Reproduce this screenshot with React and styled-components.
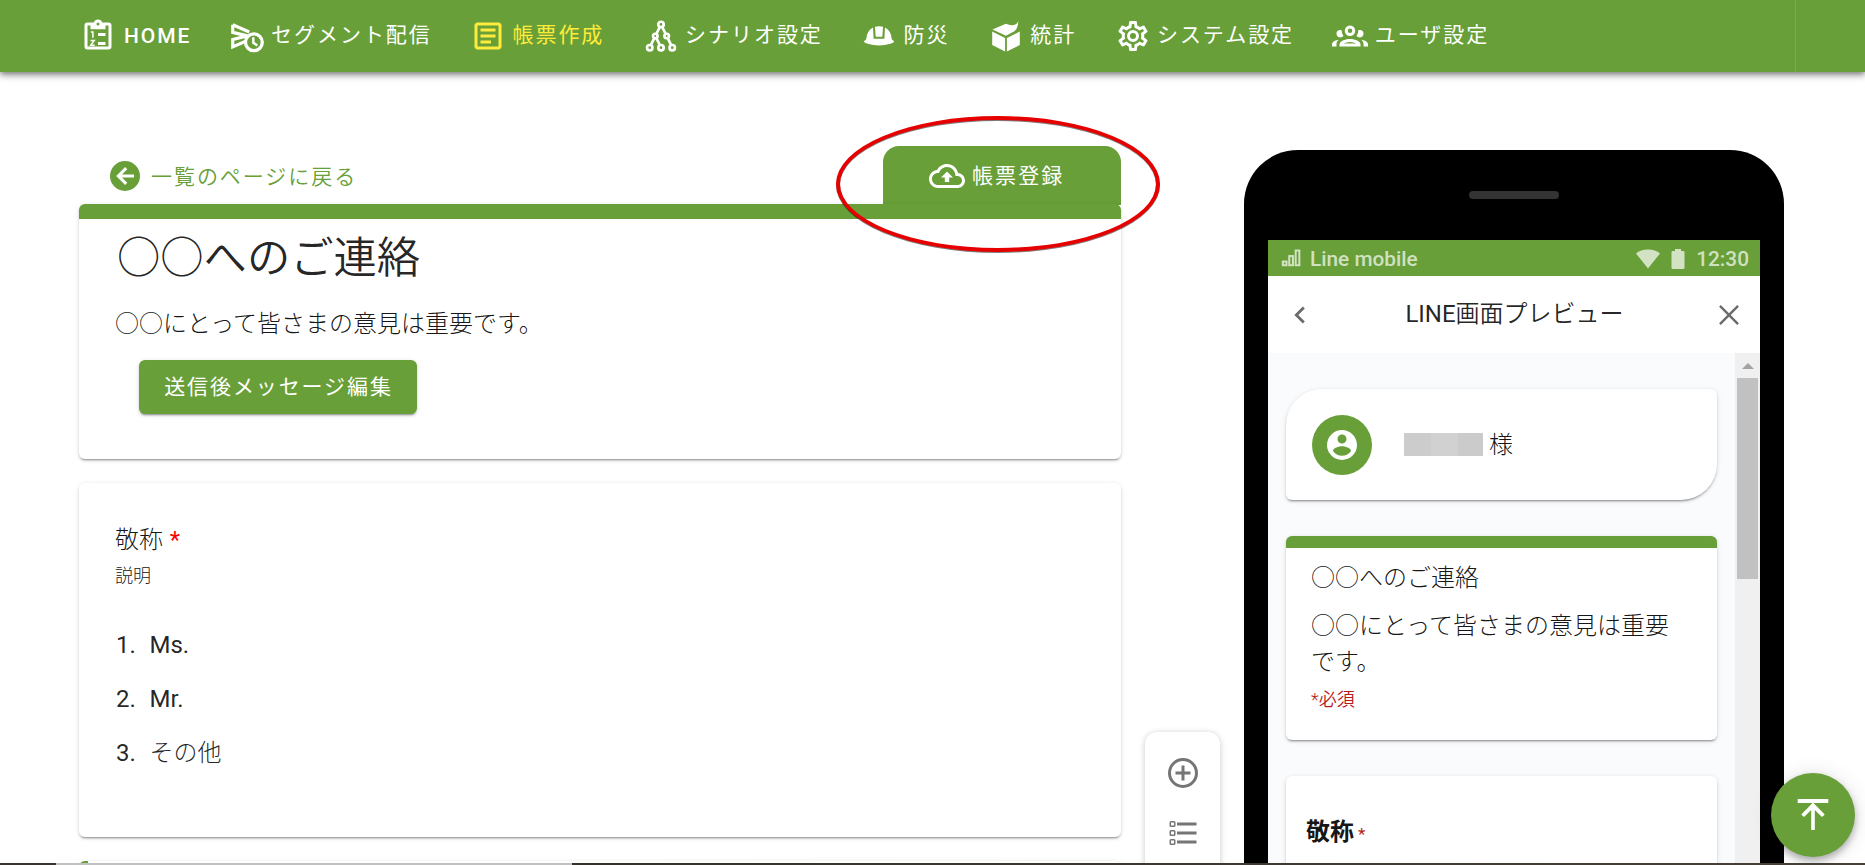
import React from "react";
import styled, { createGlobalStyle, css } from "styled-components";

const GREEN = "#689f38";

const GlobalStyle = createGlobalStyle`
  *, *::before, *::after { box-sizing: border-box; }
  body {
    margin: 0;
    background: #fff;
    color: rgba(0, 0, 0, 0.92);
    font-family: Roboto, "Noto Sans CJK JP", sans-serif;
    font-weight: 300;
    overflow: hidden;
  }
`;

const elevation = css`
  box-shadow: 0 3px 1px -2px rgba(0, 0, 0, 0.2), 0 2px 2px 0 rgba(0, 0, 0, 0.14),
    0 1px 5px 0 rgba(0, 0, 0, 0.12);
`;

const Page = styled.div`
  position: relative;
  width: 1865px;
  height: 865px;
  overflow: hidden;
  display: flex;
  flex-direction: column;
`;

const Header = styled.header`
  flex: none;
  height: 72px;
  display: flex;
  justify-content: space-between;
  background: ${GREEN};
  box-shadow: 0 2px 6px rgba(0, 0, 0, 0.45), 0 4px 8px rgba(0, 0, 0, 0.15);
`;

const Nav = styled.nav`
  display: flex;
  align-items: center;
  gap: 38.4px;
  padding: 0 0 1px 80px;
`;

const NavItem = styled.a`
  display: flex;
  align-items: center;
  gap: 6.4px;
  color: ${(p) => (p.$active ? "#ffeb3b" : "#fff")};
  white-space: nowrap;
`;

const NavLabel = styled.span`
  padding-top: ${(p) => (p.$latin ? 1 : 0)}px;
  padding-bottom: ${(p) => (p.$latin ? 0 : 1)}px;
  padding-left: ${(p) => (p.$latin ? 1.5 : 0)}px;
  margin-right: ${(p) => (p.$latin ? -1 : 0)}px;
  font-size: 21px;
  line-height: 32px;
  letter-spacing: 1.95px;
  font-weight: ${(p) => (p.$latin ? 500 : 400)};
`;

const HeaderEnd = styled.div`
  width: 70px;
  border-left: 1px solid #79ab4e;
`;

const Svg = styled.svg`
  flex: none;
  display: block;
  width: ${(p) => p.$size || 36}px;
  height: ${(p) => p.$size || 36}px;
  fill: currentColor;
`;

const Body = styled.main`
  flex: 1;
  min-height: 0;
  display: flex;
  align-items: flex-start;
  padding-left: 79px;
`;

const Editor = styled.section`
  width: 1042px;
  padding-top: 74px;
`;

const TopRow = styled.div`
  display: flex;
  justify-content: space-between;
  height: 58px;
`;

const BackLink = styled.a`
  display: flex;
  align-items: center;
  gap: 8px;
  height: 60px;
  padding-left: 28px;
  color: ${GREEN};
  font-size: 21px;
  font-weight: 350;
  letter-spacing: 1.95px;
`;

const Lifted = styled.span`
  padding-bottom: 3px;
`;

const RegisterTab = styled.button`
  display: flex;
  align-items: center;
  gap: 7px;
  width: 238px;
  height: 59px;
  padding: 0 0 0 46px;
  border: 0;
  border-radius: 16px 16px 0 0;
  background: ${GREEN};
  color: #fff;
  font: 400 21px Roboto, "Noto Sans CJK JP", sans-serif;
  letter-spacing: 2.1px;
`;

const Card = styled.article`
  position: relative;
  height: ${(p) => p.$height}px;
  margin-bottom: 24px;
  padding: ${(p) => p.$pad || "0"};
  border-radius: 6px;
  border-top: ${(p) => (p.$bar ? `${p.$bar}px solid ${GREEN}` : "0")};
  background: #fff;
  ${elevation}
`;

const FormTitle = styled.h1`
  margin: 0;
  color: rgba(0, 0, 0, 0.87);
  font-size: 43.3px;
  line-height: 60px;
  font-weight: 350;
  white-space: nowrap;
`;

const FormText = styled.p`
  margin: 17px 0 0 -2px;
  font-size: 24px;
  line-height: 36px;
  white-space: nowrap;
`;

const PrimaryButton = styled.button`
  display: block;
  width: 278px;
  height: 54px;
  margin: 18px 0 0 22px;
  padding: 0 0 4px 1px;
  border: 0;
  border-radius: 6px;
  background: ${GREEN};
  color: #fff;
  font: 400 21px Roboto, "Noto Sans CJK JP", sans-serif;
  letter-spacing: 1.9px;
  ${elevation}
`;

const Question = styled.h2`
  margin: 0;
  font-size: 24px;
  line-height: 36px;
  font-weight: 300;
`;

const Required = styled.span`
  margin-left: 1px;
  color: #f00;
  font-weight: 400;
`;

const Hint = styled.p`
  margin: 4px 0 0;
  font-size: 18px;
  line-height: 28px;
`;

const Options = styled.ol`
  list-style: none;
  margin: 28px 0 0 1px;
  padding: 0;
`;

const Option = styled.li`
  display: flex;
  height: 54px;
  align-items: center;
  font-size: 24px;
  color: rgba(0, 0, 0, 0.87);
`;

const OptionIndex = styled.span`
  width: 33.5px;
  font-weight: 400;
`;

const OptionText = styled.span`
  font-weight: ${(p) => (p.$light ? 300 : 400)};
  padding-bottom: ${(p) => (p.$light ? 5 : 0)}px;
`;

const NextCard = styled.div`
  height: 30px;
  border-radius: 6px;
  border-left: 9px solid ${GREEN};
  background: #fff;
  ${elevation}
`;

const Tools = styled.aside`
  display: flex;
  flex-direction: column;
  align-items: center;
  gap: 24px;
  width: 75px;
  height: 160px;
  margin: 660px 0 0 24px;
  padding-top: 23px;
  border-radius: 12px;
  background: #fff;
  color: #757575;
  box-shadow: 0 1px 6px rgba(0, 0, 0, 0.22);
`;

const Phone = styled.section`
  display: flex;
  flex-direction: column;
  width: 540px;
  height: 900px;
  margin: 78px 0 0 24px;
  padding: 0 24px;
  border-radius: 54px 54px 0 0;
  background: #000;
`;

const Speaker = styled.div`
  flex: none;
  width: 90px;
  height: 8px;
  margin: 41px auto;
  border-radius: 4px;
  background: #333;
`;

const StatusBar = styled.div`
  flex: none;
  display: flex;
  align-items: center;
  height: 36px;
  padding: 1px 11px 0 13px;
  background: ${GREEN};
  color: rgba(255, 255, 255, 0.7);
  font-size: 20.8px;
  font-weight: 500;
`;

const Carrier = styled.span`
  margin-left: 7px;
  margin-right: auto;
`;

const Clock = styled.span`
  margin-left: 6px;
`;

const BatterySlot = styled.span`
  margin-left: 6px;
`;

const AppBar = styled.div`
  flex: none;
  display: flex;
  align-items: center;
  justify-content: space-between;
  height: 77px;
  padding: 0 14px 0 15px;
  background: #fff;
  color: #6b6b6b;
`;

const AppTitle = styled.h3`
  margin: 0;
  padding-bottom: 7px;
  color: rgba(0, 0, 0, 0.87);
  font-size: 24px;
  font-weight: 350;
`;

const Latin = styled.span`
  font-weight: 400;
`;

const Scroller = styled.div`
  flex: 1;
  display: flex;
  background: #fafbfd;
`;

const Feed = styled.div`
  flex: 1;
  padding: 36px 18px 0;
`;

const PreviewCard = styled(Card)`
  margin-bottom: 36px;
  ${(p) => p.$leaf && "border-radius: 36px 6px 36px 6px;"}
`;

const UserRow = styled.div`
  display: flex;
  align-items: center;
  height: 100%;
  padding-left: 26px;
  font-size: 24px;
`;

const Honorific = styled.span`
  padding-bottom: 5px;
`;

const Avatar = styled.div`
  display: grid;
  place-items: center;
  width: 60px;
  height: 60px;
  margin-right: 32px;
  border-radius: 50%;
  background: ${GREEN};
  color: #fff;
`;

const MaskedName = styled.span`
  width: 79px;
  height: 23px;
  margin-right: 6px;
  background: linear-gradient(90deg, #cccccc 34%, #d1d1d1 34% 68%, #cbcbcb 68%);
`;

const PreviewLine = styled.p`
  margin: ${(p) => p.$top || 0}px 0 0 -1px;
  font-size: 24px;
  line-height: 36px;
`;

const RequiredNote = styled.p`
  margin: 6px 0 0 -1px;
  color: #b71c1c;
  font-size: 18px;
  font-weight: 350;
  line-height: 28px;
`;

const PreviewQuestion = styled.h4`
  margin: 0;
  font-size: 24px;
  line-height: 36px;
  font-weight: 700;
`;

const SmallMark = styled.span`
  margin-left: 4px;
  color: #b71c1c;
  font-size: 17px;
  font-weight: 400;
`;

const ScrollTrack = styled.div`
  display: flex;
  flex-direction: column;
  align-items: center;
  width: 25px;
  background: #f0f0f0;
`;

const ScrollArrow = styled.div`
  margin: 10px 0 9px;
  border: 6px solid transparent;
  border-top: 0;
  border-bottom-color: #a3a3a3;
`;

const ScrollThumb = styled.div`
  width: 21px;
  height: 201px;
  background: #c1c1c1;
`;

const TopButton = styled.button`
  position: absolute;
  right: 10px;
  bottom: 8px;
  display: grid;
  place-items: center;
  width: 84px;
  height: 84px;
  padding: 0;
  border: 0;
  border-radius: 50%;
  background: ${GREEN};
  color: #fff;
  box-shadow: 0 4px 7px rgba(0, 0, 0, 0.28), 0 2px 22px rgba(0, 0, 0, 0.12);
`;

const Highlight = styled.div`
  position: absolute;
  left: 836px;
  top: 116px;
  width: 324px;
  height: 136px;
  border: 4px solid #e60000;
  border-radius: 50%;
  filter: drop-shadow(0 1px 0.5px rgba(0, 0, 0, 0.5));
`;

const BottomEdge = styled.div`
  position: absolute;
  left: 0;
  right: 0;
  bottom: 0;
  height: 2px;
  background: linear-gradient(90deg, #3a3430 56px, #c1c1c1 56px 572px, #35322c 572px, #474039);
`;

const icons = {
  clipboard: (
    <>
      <path d="M19 3h-4.200a3 3 0 0 0-5.600 0H5a2 2 0 0 0-2 2V19a2 2 0 0 0 2 2H19a2 2 0 0 0 2-2V5a2 2 0 0 0-2-2zM12 3a1 1 0 1 1 0 2 1 1 0 0 1 0-2zM19 19H5V5H7V7.500H17V5H19z" />
      <path d="M12 10H17V12H12zM12 16H17V18H12z" />
      <path d="M7.200 9.400H8.600V13.100M7 15H9.500L7.200 18.100H9.800" fill="none" stroke="currentColor" strokeWidth="1" />
    </>
  ),
  send: (
    <>
      <path d="M2.500 4.500L13.500 9.300M2.500 4.500V9.600L12.300 11.900L2.500 14.300V19.300L11.500 15.300" fill="none" stroke="currentColor" strokeWidth="2.100" />
      <circle cx="16.600" cy="16.200" r="5.600" fill="none" stroke="currentColor" strokeWidth="2.200" />
      <path d="M16.200 12.900V16.500L18.900 18.300" fill="none" stroke="currentColor" strokeWidth="1.600" />
    </>
  ),
  document: (
    <path d="M5 3C3.900 3 3 3.900 3 5V19C3 20.100 3.900 21 5 21H19C20.100 21 21 20.100 21 19V5C21 3.900 20.100 3 19 3H5M5 5H19V19H5V5M7 7V9H17V7H7M7 11V13H17V11H7M7 15V17H14V15H7Z" />
  ),
  tree: (
    <g fill="none" stroke="currentColor" strokeWidth="1.800">
      <circle cx="12" cy="4.300" r="1.800" />
      <circle cx="8.200" cy="12" r="1.500" />
      <circle cx="15.800" cy="12" r="1.500" />
      <circle cx="4.500" cy="19.800" r="1.800" />
      <circle cx="12" cy="19.800" r="1.800" />
      <circle cx="19.500" cy="19.800" r="1.800" />
      <path d="M11.200 6L8.900 10.600M12.800 6L15.100 10.600M7.500 13.400L5.300 18M8.900 13.400L11.200 18M16.500 13.400L18.700 18" />
    </g>
  ),
  helmet: (
    <path d="M9.300 5.900Q12 5.100 14.700 5.900L14.200 12.500H9.800ZM8 6.400L8.400 13.900H15.600L16 6.400Q20.200 8.600 20.500 14.200L22.200 15.700Q21.800 16.600 19.600 17.200Q12 19.400 4.400 17.200Q2.200 16.600 1.800 15.700L3.500 14.200Q3.800 8.600 8 6.400Z" />
  ),
  box: (
    <>
      <path d="M2.800 9L11.400 13.300V22.300L2.800 18ZM21.200 9L12.600 13.300V22.300L21.200 18Z" />
      <path d="M3 7.600L11.900 3.800Q17.800 6.400 20.300 2.200Q19.900 7.200 17.600 8.900L12 11.900Z" />
    </>
  ),
  cog: (
    <path d="M12,8A4,4 0 0,1 16,12A4,4 0 0,1 12,16A4,4 0 0,1 8,12A4,4 0 0,1 12,8M12,10A2,2 0 0,0 10,12A2,2 0 0,0 12,14A2,2 0 0,0 14,12A2,2 0 0,0 12,10M10,22C9.75,22 9.54,21.82 9.5,21.58L9.13,18.93C8.5,18.68 7.96,18.34 7.44,17.94L4.95,18.95C4.73,19.03 4.46,18.95 4.34,18.73L2.34,15.27C2.21,15.05 2.27,14.78 2.46,14.63L4.57,12.97L4.5,12L4.57,11L2.46,9.37C2.27,9.22 2.21,8.95 2.34,8.73L4.34,5.27C4.46,5.05 4.73,4.96 4.95,5.05L7.44,6.05C7.96,5.66 8.5,5.32 9.13,5.07L9.5,2.42C9.54,2.18 9.75,2 10,2H14C14.25,2 14.46,2.18 14.5,2.42L14.87,5.07C15.5,5.32 16.04,5.66 16.56,6.05L19.05,5.05C19.27,4.96 19.54,5.05 19.66,5.27L21.66,8.73C21.79,8.95 21.73,9.22 21.54,9.37L19.43,11L19.5,12L19.43,13L21.54,14.63C21.73,14.78 21.79,15.05 21.66,15.27L19.66,18.73C19.54,18.95 19.27,19.04 19.05,18.95L16.56,17.95C16.04,18.34 15.5,18.68 14.87,18.93L14.5,21.58C14.46,21.82 14.25,22 14,22H10M11.25,4L10.88,6.61C9.68,6.86 8.62,7.5 7.85,8.39L5.44,7.35L4.69,8.65L6.8,10.2C6.4,11.37 6.4,12.64 6.8,13.8L4.68,15.36L5.43,16.66L7.86,15.62C8.63,16.5 9.68,17.14 10.87,17.38L11.24,20H12.76L13.13,17.39C14.32,17.14 15.37,16.5 16.14,15.62L18.57,16.66L19.32,15.36L17.2,13.81C17.6,12.64 17.6,11.37 17.2,10.2L19.31,8.65L18.56,7.35L16.15,8.39C15.38,7.5 14.32,6.86 13.12,6.62L12.75,4H11.25Z" />
  ),
  group: (
    <path d="M12,5A3.5,3.5 0 0,0 8.5,8.5A3.5,3.5 0 0,0 12,12A3.5,3.5 0 0,0 15.5,8.5A3.5,3.5 0 0,0 12,5M12,7A1.5,1.5 0 0,1 13.5,8.5A1.5,1.5 0 0,1 12,10A1.5,1.5 0 0,1 10.5,8.5A1.5,1.5 0 0,1 12,7M5.5,8A2.5,2.5 0 0,0 3,10.5C3,11.44 3.53,12.25 4.29,12.68C4.65,12.88 5.06,13 5.5,13C5.94,13 6.35,12.88 6.71,12.68C7.08,12.47 7.39,12.17 7.62,11.81C6.89,10.86 6.5,9.7 6.5,8.5C6.5,8.41 6.5,8.31 6.5,8.22C6.2,8.08 5.86,8 5.5,8M18.5,8C18.14,8 17.8,8.08 17.5,8.22C17.5,8.31 17.5,8.41 17.5,8.5C17.5,9.7 17.11,10.86 16.38,11.81C16.5,12 16.63,12.15 16.78,12.3C16.94,12.45 17.1,12.58 17.29,12.68C17.65,12.88 18.06,13 18.5,13C18.94,13 19.35,12.88 19.71,12.68C20.47,12.25 21,11.44 21,10.5A2.5,2.5 0 0,0 18.5,8M12,14C9.66,14 5,15.17 5,17.5V19H19V17.5C19,15.17 14.34,14 12,14M4.71,14.55C2.78,14.78 0,15.76 0,17.5V19H3V17.07C3,16.06 3.69,15.22 4.71,14.55M19.29,14.55C20.31,15.22 21,16.06 21,17.07V19H24V17.5C24,15.76 21.22,14.78 19.29,14.55M12,16C13.53,16 15.24,16.5 16.23,17H7.77C8.76,16.5 10.47,16 12,16Z" />
  ),
  back: (
    <path d="M2,12A10,10 0 0,1 12,2A10,10 0 0,1 22,12A10,10 0 0,1 12,22A10,10 0 0,1 2,12M18,11H10L13.5,7.5L12.08,6.08L6.16,12L12.08,17.92L13.5,16.5L10,13H18V11Z" />
  ),
  upload: (
    <path d="M19.35 10.04C18.67 6.59 15.64 4 12 4 9.11 4 6.61 5.64 5.36 8.04 2.35 8.36 0 10.91 0 14c0 3.31 2.69 6 6 6h13c2.76 0 5-2.24 5-5 0-2.64-2.05-4.78-4.65-4.96zM19 18H6c-2.21 0-4-1.79-4-4 0-2.05 1.53-3.76 3.56-3.97l1.07-.11.5-.95C8.08 7.14 9.94 6 12 6c2.62 0 4.88 1.86 5.39 4.43l.3 1.5 1.53.11c1.56.1 2.78 1.41 2.78 2.96 0 1.65-1.35 3-3 3zM8 13h2.55v3h2.9v-3H16l-4-4z" />
  ),
  plus: (
    <path d="M12,20C7.59,20 4,16.41 4,12C4,7.59 7.59,4 12,4C16.41,4 20,7.59 20,12C20,16.41 16.41,20 12,20M12,2A10,10 0 0,0 2,12A10,10 0 0,0 12,22A10,10 0 0,0 22,12A10,10 0 0,0 12,2M13,7H11V11H7V13H11V17H13V13H17V11H13V7Z" />
  ),
  list: (
    <>
      <path d="M8 5H21V7H8zM8 11H21V13H8zM8 17H21V19H8z" />
      <g fill="none" stroke="currentColor" strokeWidth="1">
        <rect x="3.500" y="4.500" width="3" height="3" rx="0.500" />
        <rect x="3.500" y="10.500" width="3" height="3" rx="0.500" />
        <rect x="3.500" y="16.500" width="3" height="3" rx="0.500" />
      </g>
    </>
  ),
  chevron: <path d="M15.41 16.58L10.83 12L15.41 7.41L14 6L8 12L14 18L15.41 16.58Z" />,
  close: (
    <path d="M19,6.2L17.8,5L12,10.8L6.2,5L5,6.2L10.8,12L5,17.8L6.2,19L12,13.2L17.8,19L19,17.8L13.2,12L19,6.2Z" />
  ),
  account: (
    <path d="M12,19.2C9.5,19.2 7.29,17.92 6,16C6.03,14 10,12.9 12,12.9C14,12.9 17.97,14 18,16C16.71,17.92 14.5,19.2 12,19.2M12,5A3,3 0 0,1 15,8A3,3 0 0,1 12,11A3,3 0 0,1 9,8A3,3 0 0,1 12,5M12,2A10,10 0 0,0 2,12A10,10 0 0,0 12,22A10,10 0 0,0 22,12C22,6.47 17.5,2 12,2Z" />
  ),
  signal: (
    <g fill="none" stroke="currentColor" strokeWidth="2.200">
      <rect x="2" y="14.800" width="4" height="4" />
      <rect x="9" y="8.800" width="4" height="10" />
      <rect x="16" y="2.800" width="4" height="16" />
    </g>
  ),
  wifi: <path d="M12 21.500L0 6.500Q4.500 2.500 12 2.500T24 6.500Z" />,
  battery: <path d="M17.200 4H15V2H9V4H6.800A1.300 1.300 0 0 0 5.500 5.300V20.700A1.300 1.300 0 0 0 6.800 22H17.200A1.300 1.300 0 0 0 18.500 20.700V5.300A1.300 1.300 0 0 0 17.200 4Z" />,
  toTop: (
    <path d="M1.800 1.400H22.200V4H1.800zM12 3.600L4.200 11.600L6 13.400L10.800 8.600V22H13.200V8.600L18 13.400L19.800 11.600Z" />
  ),
};

const Icon = ({ name, size }) => (
  <Svg viewBox="0 0 24 24" $size={size} aria-hidden="true">
    {icons[name]}
  </Svg>
);

const navItems = [
  { icon: "clipboard", label: "HOME", latin: true },
  { icon: "send", label: "セグメント配信" },
  { icon: "document", label: "帳票作成", active: true },
  { icon: "tree", label: "シナリオ設定" },
  { icon: "helmet", label: "防災" },
  { icon: "box", label: "統計" },
  { icon: "cog", label: "システム設定" },
  { icon: "group", label: "ユーザ設定" },
];

const options = [{ text: "Ms." }, { text: "Mr." }, { text: "その他", light: true }];

export default function App() {
  return (
    <Page>
      <GlobalStyle />
      <Header>
        <Nav>
          {navItems.map((item) => (
            <NavItem key={item.label} $active={item.active}>
              <Icon name={item.icon} />
              <NavLabel $latin={item.latin}>{item.label}</NavLabel>
            </NavItem>
          ))}
        </Nav>
        <HeaderEnd />
      </Header>

      <Body>
        <Editor>
          <TopRow>
            <BackLink>
              <Icon name="back" />
              <Lifted>一覧のページに戻る</Lifted>
            </BackLink>
            <RegisterTab>
              <Icon name="upload" />
              <Lifted>帳票登録</Lifted>
            </RegisterTab>
          </TopRow>

          <Card $height={255} $bar={15} $pad="10px 38px 0">
            <FormTitle>○○へのご連絡</FormTitle>
            <FormText>○○にとって皆さまの意見は重要です。</FormText>
            <PrimaryButton>送信後メッセージ編集</PrimaryButton>
          </Card>

          <Card $height={354} $pad="39px 36px 0">
            <Question>
              敬称 <Required>*</Required>
            </Question>
            <Hint>説明</Hint>
            <Options>
              {options.map((option, i) => (
                <Option key={option.text}>
                  <OptionIndex>{i + 1}.</OptionIndex>
                  <OptionText $light={option.light}>{option.text}</OptionText>
                </Option>
              ))}
            </Options>
          </Card>

          <NextCard />
        </Editor>

        <Tools>
          <Icon name="plus" />
          <Icon name="list" />
        </Tools>

        <Phone>
          <Speaker />
          <StatusBar>
            <Icon name="signal" size={22} />
            <Carrier>Line mobile</Carrier>
            <Icon name="wifi" size={24} />
            <BatterySlot>
              <Icon name="battery" size={24} />
            </BatterySlot>
            <Clock>12:30</Clock>
          </StatusBar>
          <AppBar>
            <Icon name="chevron" size={34} />
            <AppTitle>
              <Latin>LINE</Latin>画面プレビュー
            </AppTitle>
            <Icon name="close" size={34} />
          </AppBar>
          <Scroller>
            <Feed>
              <PreviewCard $height={111} $leaf>
                <UserRow>
                  <Avatar>
                    <Icon name="account" />
                  </Avatar>
                  <MaskedName />
                  <Honorific>様</Honorific>
                </UserRow>
              </PreviewCard>
              <PreviewCard $height={204} $bar={12} $pad="12px 26px 0">
                <PreviewLine>○○へのご連絡</PreviewLine>
                <PreviewLine $top={12}>○○にとって皆さまの意見は重要です。</PreviewLine>
                <RequiredNote>*必須</RequiredNote>
              </PreviewCard>
              <PreviewCard $height={200} $pad="38px 20px 0">
                <PreviewQuestion>
                  敬称<SmallMark>*</SmallMark>
                </PreviewQuestion>
              </PreviewCard>
            </Feed>
            <ScrollTrack>
              <ScrollArrow />
              <ScrollThumb />
            </ScrollTrack>
          </Scroller>
        </Phone>
      </Body>

      <Highlight />
      <TopButton>
        <Icon name="toTop" />
      </TopButton>
      <BottomEdge />
    </Page>
  );
}
